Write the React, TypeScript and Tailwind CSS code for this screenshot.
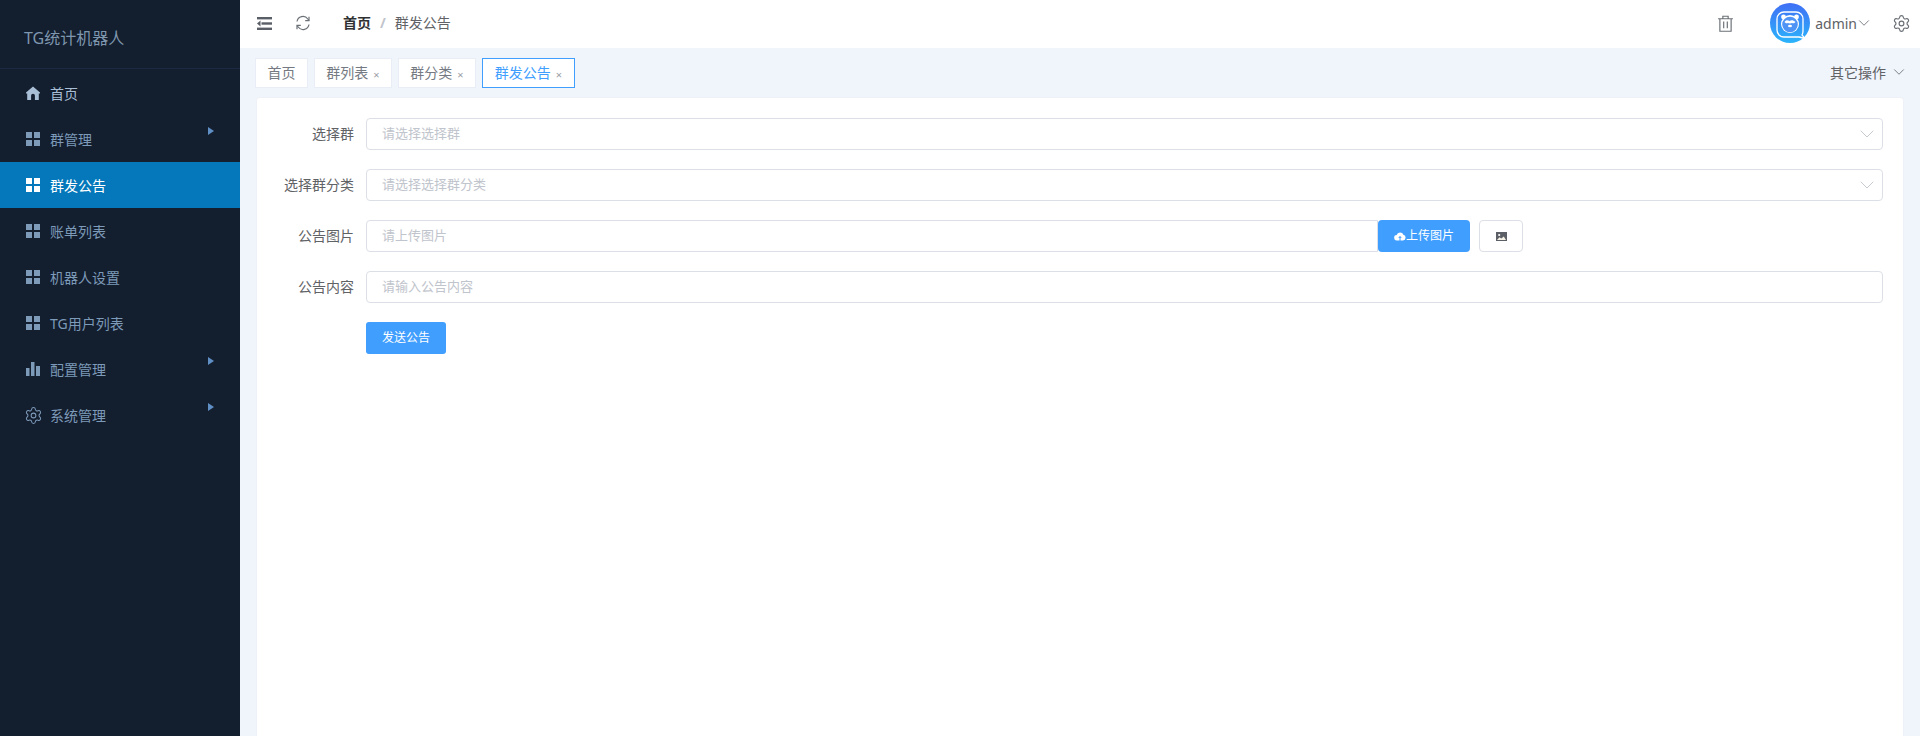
import { ChevronDown, Settings } from 'lucide-react';

const FONT = "font-['Noto_Sans','Noto_Sans_CJK_SC',sans-serif]";

function HomeIcon() {
  return (
    <svg viewBox="0 0 14 14" className="w-[14px] h-[14px]" fill="currentColor">
      <path d="M7 .6 0 6.6v.9l1.2.1V14h3.9V9.600a1.900 1.900 0 0 1 3.800 0V14h3.900V7.600l1.200-.1v-.9L7 .6Z" />
    </svg>
  );
}

function GridIcon() {
  return (
    <svg viewBox="0 0 14 14" className="w-[14px] h-[14px]" fill="currentColor">
      <rect x="0" y="0" width="6" height="6" />
      <rect x="8" y="0" width="6" height="6" />
      <rect x="0" y="8" width="6" height="6" />
      <rect x="8" y="8" width="6" height="6" />
    </svg>
  );
}

function BarsIcon() {
  return (
    <svg viewBox="0 0 14 14" className="w-[14px] h-[14px]" fill="currentColor">
      <rect x="0" y="6" width="3.500" height="8" />
      <rect x="5" y="0" width="3.500" height="14" />
      <rect x="10" y="4" width="4" height="10" />
    </svg>
  );
}

function Avatar() {
  return (
    <svg viewBox="0 0 40 40" className="w-10 h-10 block">
      <defs>
        <linearGradient id="avatarBg" x1="0" y1="0" x2="0" y2="1">
          <stop offset="0" stopColor="#3f6ff5" />
          <stop offset="1" stopColor="#2bb4fb" />
        </linearGradient>
      </defs>
      <circle cx="20" cy="20" r="20" fill="url(#avatarBg)" />
      <path d="M14 9h12a7 7 0 0 1 7 7v12c0 1.500-.3 2.800-1 4l3 3.500-6-1.500H14a7 7 0 0 1-7-7V16a7 7 0 0 1 7-7Z" fill="none" stroke="#fff" strokeWidth="1.300" />
      <circle cx="13.500" cy="14" r="2.400" fill="#fff" />
      <circle cx="26.500" cy="14" r="2.400" fill="#fff" />
      <circle cx="20" cy="21" r="9" fill="#fff" />
      <circle cx="20" cy="21.500" r="7.800" fill="#4f93f5" />
      <path d="M14.500 19c1.500-2.500 3.500-2 5-1 1.500-1 3.500-1.500 6 1-1 1.500-2.500 1.500-3.500 1l-2 .5-2-.5c-1 .5-2.500.5-3.500-1Z" fill="#fff" />
      <ellipse cx="20" cy="23" rx="2" ry="1.300" fill="#fff" />
    </svg>
  );
}

const menu = [
  { label: '首页', icon: <HomeIcon />, bright: true },
  { label: '群管理', icon: <GridIcon />, arrow: true },
  { label: '群发公告', icon: <GridIcon />, active: true },
  { label: '账单列表', icon: <GridIcon /> },
  { label: '机器人设置', icon: <GridIcon /> },
  { label: 'TG用户列表', icon: <GridIcon /> },
  { label: '配置管理', icon: <BarsIcon />, arrow: true },
  { label: '系统管理', icon: <Settings className="w-[19px] h-[19px] shrink-0" strokeWidth={1.300} />, arrow: true },
];

const tabs = [
  { label: '首页', width: 'w-[53px]' },
  { label: '群列表', close: true, width: 'w-[78px]' },
  { label: '群分类', close: true, width: 'w-[78px]' },
  { label: '群发公告', close: true, active: true, width: 'w-[93px]' },
];

function Sidebar() {
  return (
    <aside className="w-[240px] shrink-0 h-full bg-[#131e2f]">
      {/* Logo */}
      <div className="h-[69px] border-b border-[#1b2a40] pl-6 pt-[27px] text-[16px] leading-[22px] text-[#7f97ae]">
        TG统计机器人
      </div>

      {/* Menu */}
      <nav className="pt-px text-[14px]">
        {menu.map((item) => (
          <div
            key={item.label}
            className={`relative h-[46px] flex items-center pl-[26px] ${
              item.active
                ? 'bg-[#0478bb] text-white'
                : item.bright
                  ? 'text-[#a9bfd6]'
                  : 'text-[#7d9ab8]'
            }`}
          >
            <span className="w-[14px] mr-[10px] flex items-center justify-center">{item.icon}</span>
            <span>{item.label}</span>
            {item.arrow && (
              <span className="absolute left-[208px] top-[11px] w-0 h-0 border-y-[4px] border-y-transparent border-l-[6px] border-l-[#5f8fc4]" />
            )}
          </div>
        ))}
      </nav>
    </aside>
  );
}

function Header() {
  return (
    <header className="h-12 shrink-0 pb-[2px] bg-white flex items-center text-[14px]">
      <svg viewBox="0 0 15 13" className="w-[15px] h-[13px] ml-[17px] text-[#5a5e66]" fill="currentColor">
        <rect x="0" y="0" width="15" height="2.400" />
        <rect x="4.500" y="5.300" width="10.500" height="2.400" />
        <rect x="0" y="10.600" width="15" height="2.400" />
        <path d="M3.500 3.500 0 6.500l3.500 3Z" />
      </svg>
      <svg viewBox="0 0 16 16" className="w-[16px] h-[16px] ml-[23px] text-[#6b7076]" fill="none" stroke="currentColor" strokeWidth="1.200">
        <path d="M2 6.500A6 6 0 0 1 12.800 4L14 5.500" />
        <path d="M14 1.800v3.900h-3.800" />
        <path d="M14 9.500A6 6 0 0 1 3.200 12L2 10.500" />
        <path d="M2 14.200v-3.900h3.800" />
      </svg>
      <div className="flex items-center pb-[2px]">
        <span className="ml-[32px] font-bold text-[#303133]">首页</span>
        <span className="mx-[9px] font-bold text-[#c0c4cc]">/</span>
        <span className="text-[#606266]">群发公告</span>
      </div>

      <div className="ml-auto flex items-center">
        <svg viewBox="0 0 16 16" className="w-[17px] h-[17px] text-[#6b7076]" fill="none" stroke="currentColor" strokeWidth="1.100">
          <path d="M1 3.500h14M5.500 3.500V1.200h5v2.300M2.700 3.500v11.800h10.600V3.500M6.300 6v6.500M9.700 6v6.500" />
        </svg>
        <span className="ml-[36px]">
          <Avatar />
        </span>
        <span className="ml-[5px] text-[#606266]">admin</span>
        <ChevronDown className="w-[18px] h-[18px] -ml-[2px] text-[#70747b]" strokeWidth={1.200} />
        <Settings className="w-[19px] h-[19px] ml-[19px] mr-[9px] text-[#6b7076]" strokeWidth={1.500} />
      </div>
    </header>
  );
}

function TabBar() {
  return (
    <div className="h-[49px] shrink-0 pl-[15px] flex items-center pt-[1px] text-[14px]">
      <div className="flex gap-[6px] items-center">
        {tabs.map((tab) => (
          <div
            key={tab.label}
            className={`${tab.width} h-[30px] pb-[2px] flex items-center justify-center gap-[5px] bg-white border ${
              tab.active ? 'border-[#409eff] text-[#409eff]' : 'border-[#e9edf5] text-[#757a82]'
            }`}
          >
            <span>{tab.label}</span>
            {tab.close && <span className="text-[11px] leading-none mt-[4px] text-[#9a9ea6]">×</span>}
          </div>
        ))}
      </div>
      <div className="ml-auto mr-[12px] pb-[2px] flex items-center gap-[4px] text-[#606266]">
        <span>其它操作</span>
        <ChevronDown className="w-[18px] h-[18px] text-[#70747b]" strokeWidth={1.200} />
      </div>
    </div>
  );
}

function Placeholder({ text, arrow }: { text: string; arrow?: boolean }) {
  return (
    <div className="flex-1 h-8 rounded border border-[#dcdfe6] flex items-center pl-[15px] pr-[3px] bg-white text-[13px] text-[#c0c4cc]">
      <span>{text}</span>
      {arrow && <ChevronDown className="ml-auto w-6 h-6 text-[#c0c4cc]" strokeWidth={0.900} />}
    </div>
  );
}

function Row({ label, children }: { label: string; children: React.ReactNode }) {
  return (
    <div className="flex items-center">
      <label className="w-[98px] text-right pr-3 pb-[2px] shrink-0 text-[14px] text-[#606266]">{label}</label>
      {children}
    </div>
  );
}

function AnnounceForm() {
  return (
    <div className="flex-1 ml-[16px] mr-4 bg-white border border-[#eef1f7] border-b-0 rounded-t pt-[20px] pl-[11px] pr-[20px] flex flex-col gap-[19px]">
      <Row label="选择群">
        <Placeholder text="请选择选择群" arrow />
      </Row>
      <Row label="选择群分类">
        <Placeholder text="请选择选择群分类" arrow />
      </Row>
      <Row label="公告图片">
        <div className="flex-1 flex items-center">
          <div className="w-[1012px] h-8 rounded-l border border-[#dcdfe6] flex items-center pl-[15px] text-[13px] text-[#c0c4cc]">
            请上传图片
          </div>
          <button className="w-[92px] h-8 rounded bg-[#409eff] text-white text-[12px] flex items-center justify-center">
            <svg viewBox="0 0 12 10" className="w-[12px] h-[10px]" fill="currentColor">
              <path d="M3 9.500a2.700 2.700 0 0 1-.3-5.400 3.500 3.500 0 0 1 6.700-.3 2.900 2.900 0 0 1-.4 5.700H6.500V6.800h1.300L6 4.900 4.200 6.800h1.300v2.700Z" />
            </svg>
            上传图片
          </button>
          <button className="w-[44px] h-8 ml-[9px] rounded border border-[#dcdfe6] bg-white flex items-center justify-center">
            <svg viewBox="0 0 11 9" className="w-[11px] h-[9px]">
              <rect width="11" height="9" fill="#5c5f66" />
              <circle cx="3.200" cy="3" r="1.100" fill="#fff" />
              <path d="M1 8 3.500 5.300l1.800 1.300L7.800 4.500 10 8Z" fill="#f6f2e6" />
            </svg>
          </button>
        </div>
      </Row>
      <Row label="公告内容">
        <Placeholder text="请输入公告内容" />
      </Row>
      <div className="pl-[98px]">
        <button className="w-[80px] h-8 rounded-[3px] bg-[#409eff] text-white text-[12px]">发送公告</button>
      </div>
    </div>
  );
}

export default function App() {
  return (
    <div className={`w-[1920px] h-[736px] flex overflow-hidden bg-[#f0f4fb] ${FONT}`}>
      <Sidebar />
      <main className="flex-1 min-w-0 flex flex-col">
        <Header />
        <TabBar />
        <AnnounceForm />
      </main>
    </div>
  );
}
